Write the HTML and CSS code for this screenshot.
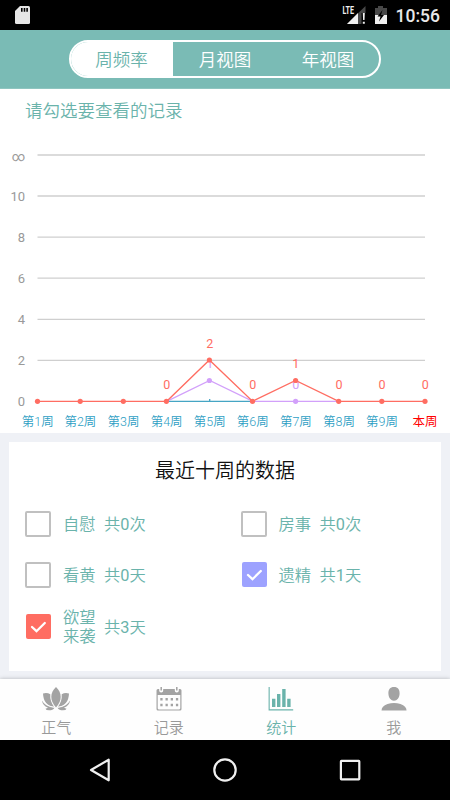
FILE: index.html
```html
<!DOCTYPE html>
<html lang="zh-CN">
<head>
    <meta charset="UTF-8">
    <meta name="viewport" content="width=device-width, initial-scale=1.0">
    <title>统计</title>
    <link rel="stylesheet" href="styles.css">
</head>
<body>
    <div class="statusbar">
        <svg class="sd" width="15" height="18" viewBox="0 0 15 18">
            <path d="M5 0H13.500Q15 0 15 1.500V16.500Q15 18 13.500 18H1.500Q0 18 0 16.500V5Z" fill="#e6e6e6"/>
            <path d="M6 2h1.600v3.700H6zM8.700 2h1.600v3.700H8.700zM11.300 2h1.600v3.700h-1.600z" fill="#000"/>
        </svg>
        <div class="status-right">
            <svg width="46" height="20" viewBox="0 0 46 20">
                <path d="M23.500 1V19H5Z" fill="#484848"/>
                <path d="M16 8V19H5Z" fill="#f0f0f0"/>
                <path d="M19.500 8h4.500v12h-4.500z" fill="#000"/>
                <path d="M20.800 8h2l-.3 7h-1.400zM20.800 16.800h2v2h-2z" fill="#f0f0f0"/>
                <text class="lte" x="0.500" y="9" textLength="11.500" lengthAdjust="spacingAndGlyphs">LTE</text>
                <path d="M36 1h5v2h4v7H33V3h3z" fill="#484848"/>
                <path d="M33 10h12v9H33z" fill="#f0f0f0"/>
                <path d="M40.500 5l-5 6.500h3l-1.500 5 5-6.500h-3z" fill="#000"/>
            </svg>
            <span class="clock">10:56</span>
        </div>
    </div>

    <div class="header">
        <div class="tabs">
            <div class="tab on">周频率</div>
            <div class="tab">月视图</div>
            <div class="tab">年视图</div>
        </div>
    </div>

    <div class="chart">
        <p class="tip">请勾选要查看的记录</p>
        <svg width="450" height="299" viewBox="0 134 450 299">
            <!-- grid -->
            <g class="grid">
                <path d="M37.500 155H425M37.500 196H425M37.500 237.200H425M37.500 278.200H425M37.500 319.300H425M37.500 360.300H425"/>
            </g>
            <g class="ylabel">
                <text x="25" y="160.500">∞</text>
                <text x="25" y="201.300">10</text>
                <text x="25" y="242.300">8</text>
                <text x="25" y="283.400">6</text>
                <text x="25" y="324.400">4</text>
                <text x="25" y="365.400">2</text>
                <text x="25" y="406.400">0</text>
            </g>
            <!-- lines -->
            <path class="line blue" d="M166.700 401.300H252.500M209.700 399V401"/>
            <path class="line purple" d="M166.700 401.300L209.700 380.500L252.800 401.300H338.700"/>
            <g class="purple-dot">
                <circle cx="209.400" cy="380.500" r="2.600"/>
                <circle cx="295.600" cy="401.300" r="2.600"/>
            </g>
            <g class="val purple-val">
                <text x="209.700" y="368">1</text>
                <text x="295.800" y="388.800">0</text>
            </g>
            <path class="line red" d="M37.500 401.300H166.700L209.400 360L252.500 401.300L295.600 380.500L338.700 401.300H425"/>
            <g class="red-dot">
                <circle cx="37.500" cy="401.300" r="2.600"/>
                <circle cx="80.200" cy="401.300" r="2.600"/>
                <circle cx="123.300" cy="401.300" r="2.600"/>
                <circle cx="166.400" cy="401.300" r="2.600"/>
                <circle cx="209.400" cy="360" r="2.600"/>
                <circle cx="252.500" cy="401.300" r="2.600"/>
                <circle cx="295.600" cy="380.500" r="2.600"/>
                <circle cx="338.700" cy="401.300" r="2.600"/>
                <circle cx="381.800" cy="401.300" r="2.600"/>
                <circle cx="425" cy="401.300" r="2.600"/>
            </g>
            <g class="val red-val">
                <text x="166.700" y="388.800">0</text>
                <text x="209.700" y="347.600">2</text>
                <text x="252.800" y="388.800">0</text>
                <text x="295.800" y="368.200">1</text>
                <text x="339" y="388.800">0</text>
                <text x="382" y="388.800">0</text>
                <text x="425.200" y="388.800">0</text>
            </g>
            <g class="xlabel">
                <text x="37.700" y="426.400">第1周</text>
                <text x="80.400" y="426.400">第2周</text>
                <text x="123.500" y="426.400">第3周</text>
                <text x="166.600" y="426.400">第4周</text>
                <text x="209.700" y="426.400">第5周</text>
                <text x="252.800" y="426.400">第6周</text>
                <text x="295.900" y="426.400">第7周</text>
                <text x="339" y="426.400">第8周</text>
                <text x="382" y="426.400">第9周</text>
                <text class="now" x="425" y="426.400">本周</text>
            </g>
        </svg>
    </div>

    <div class="main">
        <div class="card">
            <h2>最近十周的数据</h2>
            <div class="list">
                <div class="item">
                    <span class="box"></span>
                    <span class="name">自慰</span>
                    <span class="sum">共<b>0</b>次</span>
                </div>
                <div class="item">
                    <span class="box"></span>
                    <span class="name">房事</span>
                    <span class="sum">共<b>0</b>次</span>
                </div>
                <div class="item">
                    <span class="box"></span>
                    <span class="name">看黄</span>
                    <span class="sum">共<b>0</b>天</span>
                </div>
                <div class="item">
                    <span class="box box-purple">
                        <svg width="25" height="25" viewBox="0 0 25 25"><path d="M6 13L10.500 17.200L18.800 9"/></svg>
                    </span>
                    <span class="name">遗精</span>
                    <span class="sum">共<b>1</b>天</span>
                </div>
                <div class="item">
                    <span class="box box-red">
                        <svg width="25" height="25" viewBox="0 0 25 25"><path d="M6 13L10.500 17.200L18.800 9"/></svg>
                    </span>
                    <span class="name">欲望来袭</span>
                    <span class="sum">共<b>3</b>天</span>
                </div>
            </div>
        </div>
    </div>

    <div class="menu">
        <div class="menu-item">
            <svg width="30" height="26" viewBox="0 0 30 26">
                <path d="M15 1C21 6.500 21.500 14.500 15 21.500C8.500 14.500 9 6.500 15 1Z"/>
                <path d="M2 7.500Q6 6.200 9.300 8.300Q8.700 15 13 20.700Q2.500 19.500 2 7.500Z"/>
                <path d="M28 7.500Q24 6.200 20.700 8.300Q21.300 15 17 20.700Q27.500 19.500 28 7.500Z"/>
                <path d="M1 14.500Q4 20.500 13.500 21.700Q12 24.300 8 24.300Q5 24.300 4.500 22.800L7 21.700Q1.500 19.500 1 14.500Z"/>
                <path d="M29 14.500Q26 20.500 16.500 21.700Q18 24.300 22 24.300Q25 24.300 25.500 22.800L23 21.700Q28.500 19.500 29 14.500Z"/>
                <path class="vein" d="M1.500 14Q4.500 20.500 13 21.300M28.500 14Q25.500 20.500 17 21.300"/>
            </svg>
            <span>正气</span>
        </div>
        <div class="menu-item">
            <svg width="30" height="26" viewBox="0 0 30 26">
                <path fill-rule="evenodd" d="M4 3H26Q27.500 3 27.500 4.500V23Q27.500 24.500 26 24.500H4Q2.500 24.500 2.500 23V4.500Q2.500 3 4 3ZM3.700 9V22.300Q3.700 23.400 4.800 23.400H25.200Q26.300 23.400 26.300 22.300V9Z"/>
                <path class="ring" d="M7.200 1.500V4.500M22.800 1.500V4.500"/>
                <path class="pin" d="M7.200 1V4.500M22.800 1V4.500"/>
                <path d="M6.300 12h2.300v2.500H6.300zM11.500 12h2.300v2.500h-2.300zM16.700 12h2.300v2.500h-2.300zM21.900 12h2.300v2.500h-2.300zM6.300 17.700h2.300v2.500H6.300zM11.500 17.700h2.300v2.500h-2.300zM16.700 17.700h2.300v2.500h-2.300zM21.900 17.700h2.300v2.500h-2.300z"/>
            </svg>
            <span>记录</span>
        </div>
        <div class="menu-item active">
            <svg width="30" height="26" viewBox="0 0 30 26">
                <path d="M2.600 1h1.100v22.300h23.500v1.300H2.600z"/>
                <path d="M6 12.700h3.400v8.300H6zM11 8h3.400v13H11zM16.200 3h3.400v18h-3.400zM21.200 12.700h3.400v8.300h-3.400z"/>
            </svg>
            <span>统计</span>
        </div>
        <div class="menu-item">
            <svg width="30" height="26" viewBox="0 0 30 26">
                <path d="M15 1C19 1 20.700 3.500 20.600 7.500C20.500 12 18 14.700 15 14.700C12 14.700 9.500 12 9.400 7.500C9.300 3.500 11 1 15 1Z"/>
                <path d="M2.500 24.500Q2.500 20 8.500 18Q15 16 21.500 18Q27.500 20 27.500 24.500Z"/>
            </svg>
            <span>我</span>
        </div>
    </div>

    <div class="navbar">
        <svg width="26" height="26" viewBox="0 0 26 26"><path d="M21.700 2.700V23.300L4 13Z"/></svg>
        <svg width="26" height="26" viewBox="0 0 26 26"><circle cx="13" cy="13" r="10.700"/></svg>
        <svg width="26" height="26" viewBox="0 0 26 26"><rect x="3.900" y="3.900" width="18.400" height="18.400" rx=".5"/></svg>
    </div>
</body>
</html>
```

FILE: styles.css
```css
*{
    margin: 0;
    padding: 0;
    box-sizing: border-box;
}
body{
    width: 450px;
    height: 800px;
    overflow: hidden;
    display: flex;
    flex-direction: column;
    background: #eff1f6;
    color: #6ab3ab;
    font-family: Roboto, "Noto Sans CJK SC", sans-serif;
    font-weight: 350;
}
svg{
    display: block;
    flex: none;
}
.statusbar{
    height: 30px;
    padding: 0 10px 0 15px;
    display: flex;
    align-items: center;
    justify-content: space-between;
    background: #000;
}
.status-right{
    display: flex;
    align-items: center;
    gap: 8px;
}
.lte{
    font-size: 10px;
    font-weight: 700;
    fill: #f0f0f0;
}
.clock{
    color: #e8e8e8;
    font-size: 17.500px;
    font-weight: 500;
    line-height: 30px;
    padding-top: 2px;
}
.header{
    height: 59px;
    padding-top: 10px;
    background: #7abbb5;
    border-bottom: 1px solid #8fc5c0;
}
.tabs{
    width: 312px;
    height: 38px;
    margin: 0 auto;
    display: flex;
    border: 2px solid #fff;
    border-radius: 19px;
    overflow: hidden;
}
.tab{
    flex: 1;
    padding-left: 1px;
    text-align: center;
    font-size: 17.500px;
    line-height: 36px;
    color: #fff;
}
.tab.on{
    flex: none;
    width: 102px;
    padding: 0 1px 0 0;
    background: #fff;
    color: #6ab3ab;
}
.chart{
    height: 344px;
    background: #fff;
}
.tip{
    height: 45px;
    padding-left: 25px;
    font-size: 17.500px;
    line-height: 45px;
}
.grid{
    stroke: #cfcfcf;
    stroke-width: 1.300;
}
.ylabel{
    font-size: 13px;
    font-weight: 400;
    fill: #999;
    text-anchor: end;
}
.line{
    fill: none;
    stroke-width: 1.300;
}
.blue{
    stroke: #45a5c4;
}
.purple{
    stroke: #d2a0fa;
}
.red{
    stroke: #ff6d62;
}
.purple-dot{
    fill: #d2a0fa;
}
.red-dot{
    fill: #ff6d62;
}
.val, .xlabel{
    font-size: 12.500px;
    text-anchor: middle;
}
.val{
    font-weight: 400;
}
.purple-val{
    fill: #d2a0fa;
}
.red-val{
    fill: #ff6d62;
}
.xlabel{
    fill: #2fa0c4;
}
.now{
    fill: #f00;
    font-weight: 400;
}
.main{
    height: 246px;
    padding: 9px 9px 8px;
}
.card{
    height: 229px;
    padding: 13px 16px 0;
    background: #fff;
}
.card h2{
    color: #111;
    font-size: 20px;
    font-weight: 350;
    line-height: 32px;
    text-align: center;
}
.list{
    padding-top: 11px;
    display: grid;
    grid-template-columns: 215.500px 1fr;
    grid-auto-rows: 51.300px;
}
.item{
    display: flex;
    align-items: center;
    font-size: 16.300px;
    line-height: 19px;
}
.box{
    width: 26px;
    height: 26px;
    border: 2px solid #c0c0c0;
    border-radius: 2px;
    margin-right: 12px;
}
.box-purple, .box-red{
    width: 25px;
    height: 25px;
    margin: 0 12px 0 1px;
    border: none;
}
.box-purple{
    background: #9da2ff;
}
.box-red{
    background: #ff6d62;
}
.box path{
    fill: none;
    stroke: #fff;
    stroke-width: 2.300;
    stroke-linecap: round;
}
.name{
    width: 33px;
    margin-right: 8px;
    padding-top: 2px;
}
.sum{
    padding-top: 2px;
}
.sum b{
    font-weight: 400;
}
.menu{
    height: 61px;
    padding-top: 7px;
    display: flex;
    background: #fefefe;
    box-shadow: 0 0 4px rgba(0, 0, 0, 0.25);
}
.menu-item{
    flex: 1;
    display: flex;
    flex-direction: column;
    align-items: center;
    color: #999;
    font-size: 15px;
    line-height: 32px;
}
.menu-item svg{
    fill: #a3a3a3;
}
.menu-item.active{
    color: #6ab3ab;
}
.menu-item.active svg{
    fill: #6ab3ab;
}
.vein{
    fill: none;
    stroke: #fefefe;
    stroke-width: .7;
}
.ring{
    stroke: #fff;
    stroke-width: 4;
    stroke-linecap: round;
}
.pin{
    stroke: #a3a3a3;
    stroke-width: 1.500;
}
.navbar{
    height: 60px;
    display: flex;
    align-items: center;
    justify-content: center;
    gap: 99px;
    background: #000;
    position: relative;
}
.navbar svg{
    fill: none;
    stroke: #f0f0f0;
    stroke-width: 2.200;
    stroke-linejoin: round;
}
```
